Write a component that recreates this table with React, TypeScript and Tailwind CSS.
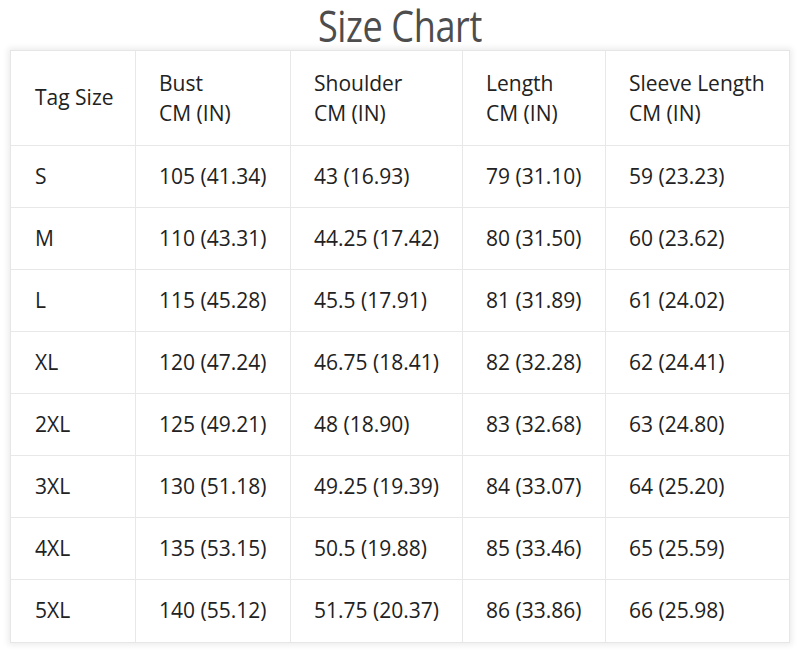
import React from "react";

const rows: string[][] = [
  ["S", "105 (41.34)", "43 (16.93)", "79 (31.10)", "59 (23.23)"],
  ["M", "110 (43.31)", "44.25 (17.42)", "80 (31.50)", "60 (23.62)"],
  ["L", "115 (45.28)", "45.5 (17.91)", "81 (31.89)", "61 (24.02)"],
  ["XL", "120 (47.24)", "46.75 (18.41)", "82 (32.28)", "62 (24.41)"],
  ["2XL", "125 (49.21)", "48 (18.90)", "83 (32.68)", "63 (24.80)"],
  ["3XL", "130 (51.18)", "49.25 (19.39)", "84 (33.07)", "64 (25.20)"],
  ["4XL", "135 (53.15)", "50.5 (19.88)", "85 (33.46)", "65 (25.59)"],
  ["5XL", "140 (55.12)", "51.75 (20.37)", "86 (33.86)", "66 (25.98)"],
];

const headers = ["Bust", "Shoulder", "Length", "Sleeve Length"];

export default function App() {
  return (
    <div className="w-[800px] h-[656px] bg-white overflow-hidden font-['Open_Sans',sans-serif] text-[#222]">
      <div className="h-[50px] flex items-center justify-center">
        <h1 className="text-[44px] leading-[50px] text-[#4d4d4d] scale-x-[0.82] tracking-[-0.5px]">Size Chart</h1>
      </div>
      <div className="ml-[10px] w-[780px] shadow-[0_0_6px_2px_rgba(0,0,0,0.08)] border border-[#e6e6e6] bg-white">
        <div className="grid grid-cols-[125px_155px_172px_143px_1fr] text-[21px]">
          <div className="h-[95px] flex items-center pl-[24px] border-b border-r border-[#e8e8e8]">Tag Size</div>
          {headers.map((h, i) => (
            <div
              key={h}
              className={`h-[95px] flex flex-col justify-center pl-[23px] leading-[30px] border-b border-[#e8e8e8] ${i < 3 ? "border-r" : ""}`}
            >
              <span>{h}</span>
              <span>CM (IN)</span>
            </div>
          ))}
          {rows.map((r, ri) =>
            r.map((c, ci) => (
              <div
                key={ri + "-" + ci}
                className={`h-[62px] flex items-center ${ci === 0 ? "pl-[24px]" : "pl-[23px]"} border-[#e8e8e8] ${ci < 4 ? "border-r" : ""} ${ri < rows.length - 1 ? "border-b" : ""}`}
              >
                {c}
              </div>
            ))
          )}
        </div>
      </div>
    </div>
  );
}
